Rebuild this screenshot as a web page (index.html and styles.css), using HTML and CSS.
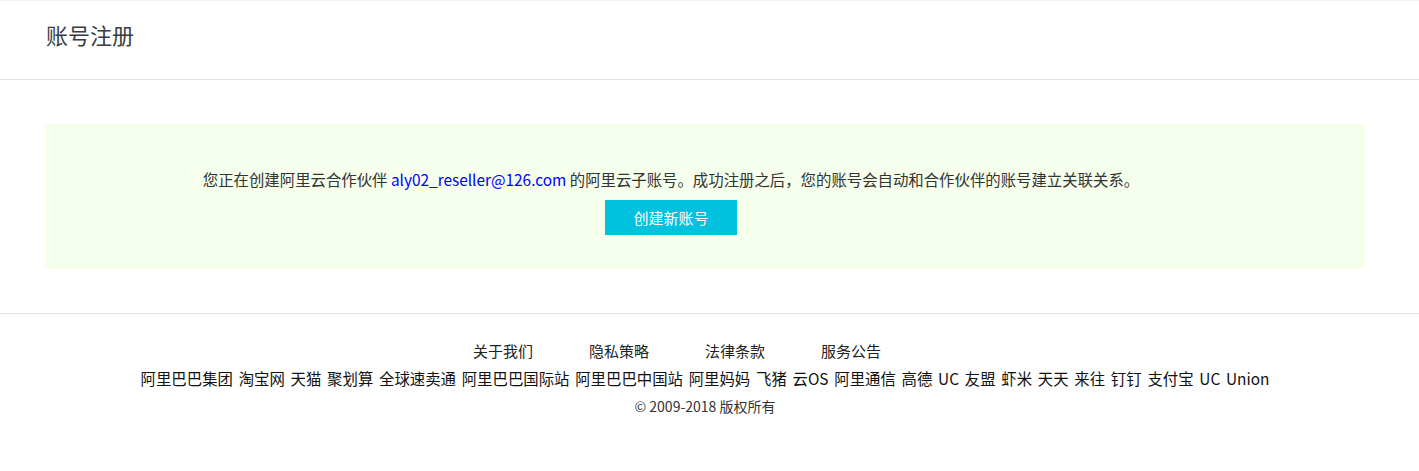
FILE: index.html
```html
<!DOCTYPE html>
<html lang="zh-CN">
<head>
<meta charset="utf-8">
<title>账号注册</title>
<link rel="stylesheet" href="styles.css">
</head>
<body>
<header class="header">
  <h1 class="title">账号注册</h1>
</header>
<main class="main">
  <section class="notice">
    <p class="notice-text">您正在创建阿里云合作伙伴 <a class="partner" href="#">aly02_reseller@126.com</a> 的阿里云子账号。成功注册之后，您的账号会自动和合作伙伴的账号建立关联关系。</p>
    <button class="btn-create" type="button">创建新账号</button>
  </section>
</main>
<footer class="footer">
  <nav class="footer-links">
    <a href="#">关于我们</a><a href="#">隐私策略</a><a href="#">法律条款</a><a href="#">服务公告</a>
  </nav>
  <div class="footer-brands">阿里巴巴集团 淘宝网 天猫 聚划算 全球速卖通 阿里巴巴国际站 阿里巴巴中国站 阿里妈妈 飞猪 云OS 阿里通信 高德 UC 友盟 虾米 天天 来往 钉钉 支付宝 UC Union</div>
  <div class="copyright">© 2009-2018 版权所有</div>
</footer>
</body>
</html>
```
FILE: styles.css
```css
html, body {
  margin: 0;
  padding: 0;
  background: #fff;
}
body {
  font-family: "Noto Sans CJK SC", "Noto Sans", sans-serif;
  color: #333;
  font-size: 15.4px;
}
.header {
  border-top: 1px solid #f2f2f2;
  border-bottom: 1px solid #e3e3e3;
  display: flex;
  align-items: center;
  padding-left: 46px;
  box-sizing: border-box;
  height: 80px;
}
.title {
  margin: -12px 0 0;
  font-size: 22px;
  font-weight: normal;
  color: #373d41;
  line-height: 30px;
}
.main {
  padding: 44px 54px 44px 45px;
}
.notice {
  background: #f5ffec;
  padding: 44px 68px 34px 0;
  display: flex;
  flex-direction: column;
  align-items: center;
}
.notice-text {
  margin: 0;
  line-height: 22px;
  font-size: 15.4px;
  color: #333;
  white-space: nowrap;
}
.partner {
  color: #0000ff;
  text-decoration: none;
}
.btn-create {
  margin-top: 10px;
  width: 132px;
  height: 35px;
  border: none;
  background: #00c1de;
  color: #fff;
  font-family: inherit;
  font-size: 15px;
  cursor: pointer;
  padding: 0;
}
.footer {
  border-top: 1px solid #e3e3e3;
  padding: 26px 9px 0 0;
  display: flex;
  flex-direction: column;
  align-items: center;
}
.footer-links {
  display: flex;
  line-height: 22px;
}
.footer-links a {
  color: #222;
  text-decoration: none;
  margin-right: 56px;
  font-size: 15px;
}
.footer-brands {
  margin-top: 5px;
  line-height: 22px;
  color: #111;
  font-size: 15.4px;
  word-spacing: 2.3px;
  white-space: nowrap;
}
.copyright {
  margin-top: 6px;
  line-height: 22px;
  font-size: 14px;
  color: #333;
}
```
